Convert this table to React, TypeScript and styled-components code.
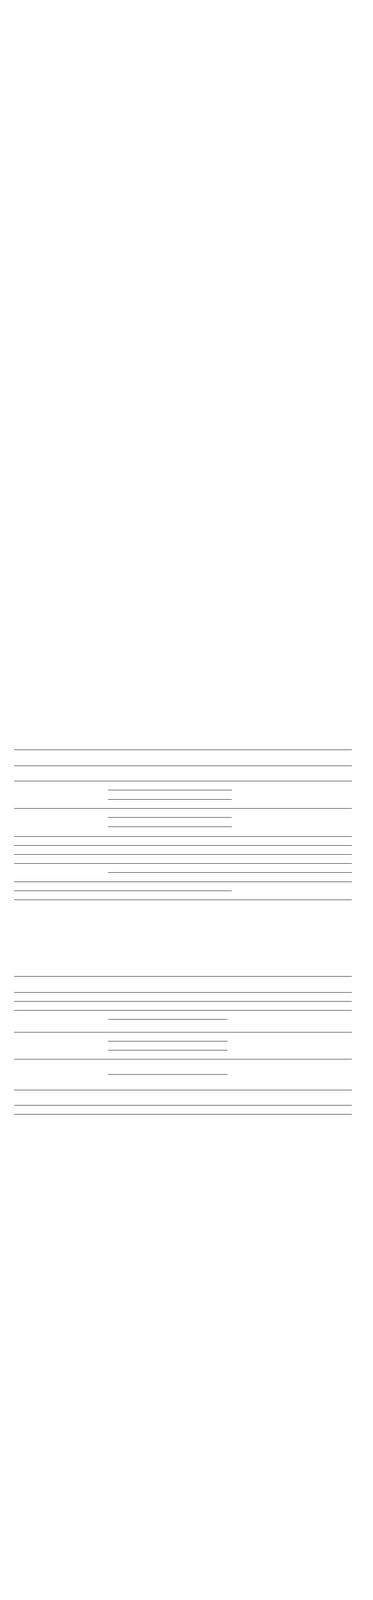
import styled, { createGlobalStyle } from "styled-components";

const GlobalStyle = createGlobalStyle`
  html, body {
    margin: 0;
    padding: 0;
    background: #ffffff;
  }
  body {
    font-family: "Liberation Sans", Arial, sans-serif;
    color: #ffffff;
  }
`;

const Page = styled.div`
  padding: 0 54px 0 36px;
  display: flex;
  flex-direction: column;
`;

const Table = styled.div<{ $top: number }>`
  margin-top: ${(p) => p.$top}px;
  display: flex;
  flex-direction: column;
  border-bottom: 1px solid #000;
`;

const Row = styled.div<{ $cols: string; $height: number }>`
  display: grid;
  grid-template-columns: ${(p) => p.$cols};
  height: ${(p) => p.$height}px;
  box-sizing: border-box;
  border-top: 1px solid #000;
`;

const Cell = styled.div<{ $span: number }>`
  grid-column: span ${(p) => p.$span};
`;

const Stack = styled.div<{ $span: number }>`
  grid-column: span ${(p) => p.$span};
  display: flex;
  flex-direction: column;
`;

const SubRow = styled.div<{ $height: number }>`
  height: ${(p) => p.$height}px;
  box-sizing: border-box;
  & + & {
    border-top: 1px solid #000;
  }
`;

// a row is a list of parts; a part spans some columns and may be split
// into sub rows (heights measured between the lines, first one includes the row border)
type Part = { span: number; subs?: number[] };
type RowData = { height: number; parts: Part[] };

const tableOne: RowData[] = [
  { height: 41, parts: [{ span: 3 }] },
  { height: 39, parts: [{ span: 3 }] },
  { height: 70, parts: [{ span: 1 }, { span: 1, subs: [23, 24, 23] }, { span: 1 }] },
  { height: 72, parts: [{ span: 1 }, { span: 1, subs: [23, 24, 25] }, { span: 1 }] },
  { height: 23, parts: [{ span: 3 }] },
  { height: 23, parts: [{ span: 3 }] },
  { height: 23, parts: [{ span: 3 }] },
  { height: 47, parts: [{ span: 1 }, { span: 2, subs: [23, 24] }] },
  { height: 46, parts: [{ span: 2, subs: [23, 23] }, { span: 1 }] },
];

const tableTwo: RowData[] = [
  { height: 41, parts: [{ span: 3 }] },
  { height: 23, parts: [{ span: 3 }] },
  { height: 23, parts: [{ span: 3 }] },
  { height: 56, parts: [{ span: 1 }, { span: 1, subs: [23, 33] }, { span: 1 }] },
  { height: 69, parts: [{ span: 1 }, { span: 1, subs: [23, 23, 23] }, { span: 1 }] },
  { height: 79, parts: [{ span: 1 }, { span: 1, subs: [39, 40] }, { span: 1 }] },
  { height: 39, parts: [{ span: 3 }] },
  { height: 23, parts: [{ span: 3 }] },
];

function GridTable({ rows, cols, top }: { rows: RowData[]; cols: string; top: number }) {
  return (
    <Table $top={top}>
      {rows.map((row, i) => (
        <Row key={i} $cols={cols} $height={row.height}>
          {row.parts.map((part, j) =>
            part.subs ? (
              <Stack key={j} $span={part.span}>
                {part.subs.map((h, k) => (
                  <SubRow key={k} $height={k === 0 ? h - 1 : h} />
                ))}
              </Stack>
            ) : (
              <Cell key={j} $span={part.span} />
            )
          )}
        </Row>
      ))}
    </Table>
  );
}

export default function App() {
  return (
    <>
      <GlobalStyle />
      <Page>
        <GridTable rows={tableOne} cols="240px 317px 307px" top={1919} />
        <GridTable rows={tableTwo} cols="240px 306px 318px" top={195} />
      </Page>
    </>
  );
}
